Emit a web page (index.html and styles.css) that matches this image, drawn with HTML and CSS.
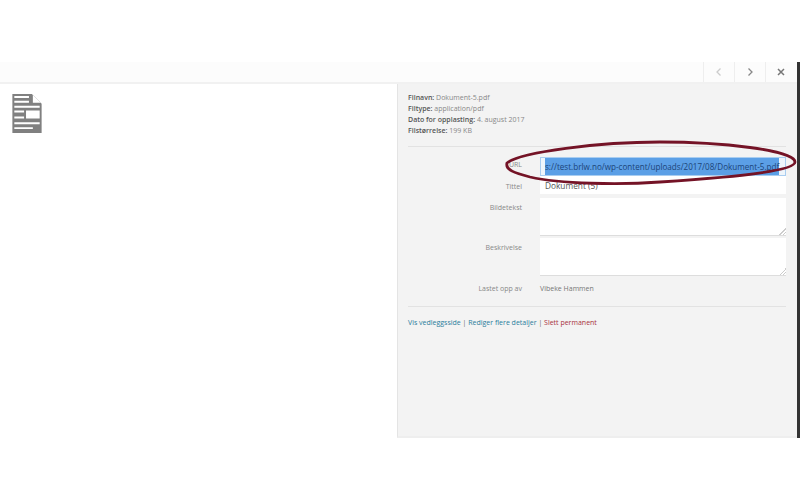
FILE: index.html
```html
<!DOCTYPE html>
<html lang="en">
<head>
  <meta charset="UTF-8">
  <meta name="viewport" content="width=device-width, initial-scale=1.0">
  <title>Vedleggsdetaljer</title>
  <link rel="stylesheet" href="styles.css">
</head>
<body>
  <div class="modal">
    <!-- Top bar with navigation -->
    <div class="modal-header">
      <button class="nav-btn">
        <svg width="10" height="10" viewBox="0 0 10 10"><path d="M6.5 1.5 3 5l3.5 3.5" fill="none" stroke="#ccc" stroke-width="1.3"/></svg>
      </button>
      <button class="nav-btn">
        <svg width="10" height="10" viewBox="0 0 10 10"><path d="M3.5 1.5 7 5 3.5 8.5" fill="none" stroke="#888" stroke-width="1.3"/></svg>
      </button>
      <button class="nav-btn">
        <svg width="10" height="10" viewBox="0 0 10 10"><path d="M2 2l6 6M8 2l-6 6" fill="none" stroke="#777" stroke-width="1.5"/></svg>
      </button>
    </div>

    <div class="modal-body">
      <!-- File preview -->
      <div class="preview">
        <svg class="doc-icon" width="30" height="39" viewBox="1 1 30 40">
          <path d="M1 1h20l10 10v30H1z" fill="#808080"/>
          <path d="M3 3h15v2H3zM3 8h15v2H3zM3 13h26v2H3zM3 18h10v2H3zM3 24h10v2H3zM15 18h14v8H15zM3 30h26v2H3zM3 35h19v2H3zM22 2l8 8h-8z" fill="#fff"/>
        </svg>
      </div>

      <!-- Attachment details -->
      <div class="sidebar">
        <div class="file-info">
          <div><b>Filnavn:</b> Dokument-5.pdf</div>
          <div><b>Filtype:</b> application/pdf</div>
          <div><b>Dato for opplasting:</b> 4. august 2017</div>
          <div><b>Filstørrelse:</b> 199 KB</div>
        </div>

        <div class="form-rows">
          <div class="form-row row-url">
            <label>URL</label>
            <div class="field url-field"><span class="selected">s://test.brlw.no/wp-content/uploads/2017/08/Dokument-5.pdf</span></div>
          </div>
          <div class="form-row row-title">
            <label>Tittel</label>
            <div class="field title-field">Dokument (5)</div>
          </div>
          <div class="form-row row-area">
            <label>Bildetekst</label>
            <textarea class="field area-field"></textarea>
          </div>
          <div class="form-row row-area">
            <label>Beskrivelse</label>
            <textarea class="field area-field"></textarea>
          </div>
          <div class="form-row row-author">
            <label>Lastet opp av</label>
            <div class="author">Vibeke Hammen</div>
          </div>
        </div>

        <div class="actions">
          <a href="#">Vis vedleggsside</a> | <a href="#">Rediger flere detaljer</a> | <a href="#" class="delete">Slett permanent</a>
        </div>
      </div>
    </div>
  </div>

  <!-- Hand drawn marking around the URL field -->
  <svg class="marking" width="300" height="55" viewBox="500 135 300 55">
    <path d="M507 163C520 152 600 142 660 142 720 142 795 150 795 162 795 172 720 178 660 182 620 185 560 184 530 177 515 173 505 170 507 163z" fill="none" stroke="#741326" stroke-width="2.8"/>
  </svg>
</body>
</html>
```

FILE: styles.css
```css
/* General Styling */
body {
  background-color: #fff;
  color: #555;
  font-family: "Open Sans", Arial, sans-serif;
  font-size: 7px;
  margin: 0;
  padding-top: 62px;
  height: 438px;
  overflow: hidden;
}

/* Modal */
.modal {
  height: 376px;
  display: flex;
  flex-direction: column;
  border-right: 3px solid #333;
}
.modal-header {
  height: 20px;
  flex-shrink: 0;
  display: flex;
  justify-content: flex-end;
  padding-right: 1px;
  background-color: #fcfcfc;
  border-bottom: 2px solid #f1f1f1;
}
.nav-btn {
  width: 31px;
  padding: 0;
  background: none;
  border: 0;
  border-left: 1px solid #eee;
  display: flex;
  align-items: center;
  justify-content: center;
}
.modal-body {
  flex: 1;
  display: flex;
  min-height: 0;
}

/* Preview */
.preview {
  flex: 1;
  padding: 10px 12px;
}
.doc-icon {
  display: block;
}

/* Sidebar */
.sidebar {
  width: 400px;
  box-sizing: border-box;
  padding: 8px 11px 0 10px;
  background-color: #f3f3f3;
  border-left: 1px solid #e4e4e4;
  border-bottom: 2px solid #eee;
}
.file-info {
  line-height: 11px;
  color: #888;
  padding-bottom: 10px;
  border-bottom: 1px solid #e2e2e2;
}
.file-info b {
  color: #555;
  font-weight: 600;
}

/* Form rows */
.form-rows {
  padding: 10px 0 11px;
  border-bottom: 1px solid #e2e2e2;
}
.form-row {
  display: flex;
  gap: 18px;
}
.form-row label {
  width: 114px;
  flex-shrink: 0;
  text-align: right;
  color: #888;
  padding-top: 3px;
}
.field {
  flex: 1;
  background-color: #fff;
  box-sizing: border-box;
}
.row-url {
  height: 19px;
}
.url-field {
  font-size: 8.1px;
  line-height: 17px;
  padding-left: 4px;
  white-space: nowrap;
  overflow: hidden;
  background-color: #eef5fb;
  border: 1px solid #a9cdf0;
}
.selected {
  display: inline-block;
  vertical-align: top;
  background-color: #5b9fe6;
  color: #1c4478;
}
.row-title {
  height: 18px;
  margin-bottom: 4px;
}
.row-title label {
  line-height: 16px;
  padding-top: 3px;
}
.title-field {
  font-size: 8.3px;
  line-height: 20px;
  padding-left: 5px;
  color: #555;
}
.row-area {
  height: 38px;
  margin-bottom: 2px;
}
.row-area label {
  padding-top: 5px;
}
.area-field {
  border: 0;
  border-bottom: 1px solid #ddd;
  margin: 0;
  padding: 0;
}
.area-field::-webkit-resizer {
  background: linear-gradient(135deg, transparent 50%, #ccc 50%, #ccc 60%, transparent 60%, transparent 75%, #ccc 75%, #ccc 85%, transparent 85%) no-repeat right bottom / 7px 7px;
}
.row-author {
  margin-top: 7px;
  line-height: 12px;
}
.row-author label {
  padding-top: 0;
}
.author {
  color: #777;
}

/* Links under the form */
.actions {
  padding-top: 11px;
  color: #666;
}
.actions a {
  color: #2a7c9c;
  text-decoration: none;
}
.actions .delete {
  color: #a8323c;
}

/* Red marking */
.marking {
  position: absolute;
  left: 500px;
  top: 135px;
}
```
